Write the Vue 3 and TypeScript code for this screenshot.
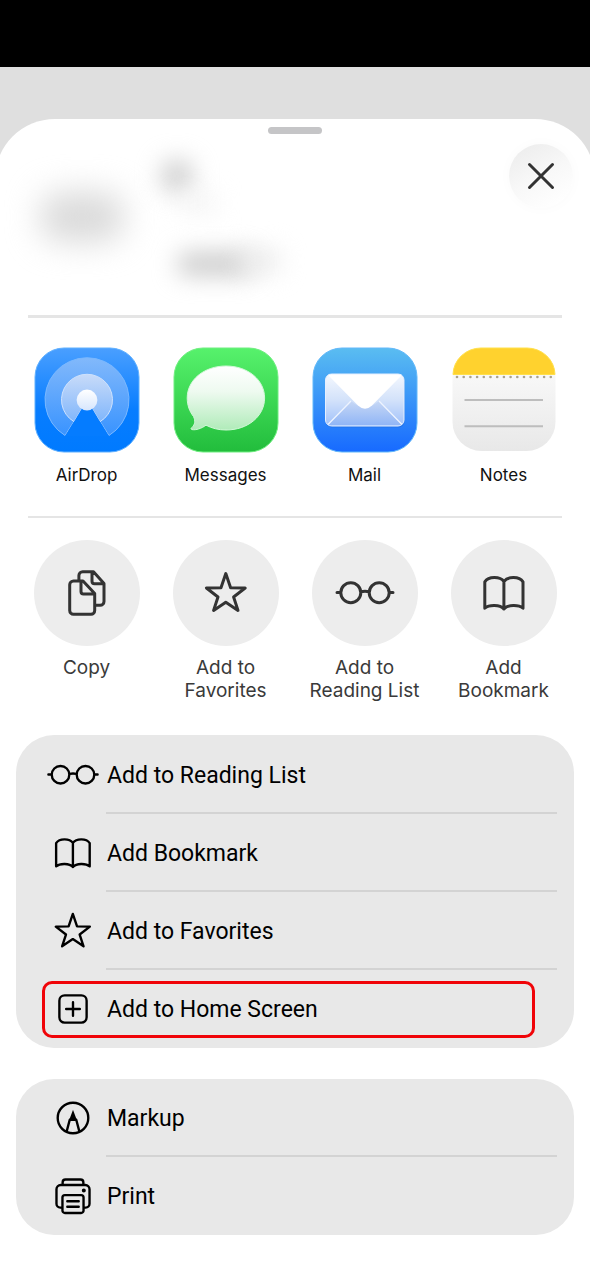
<script setup lang="ts">
type Glyph = 'copy' | 'star' | 'glasses' | 'book' | 'plus' | 'markup' | 'printer'

interface Action {
  label: string
  glyph: Glyph
  highlighted?: boolean
}

const shapes: Record<Glyph, string> = {
  copy:
    'M39.5 41H49L60.7 53.5V70.5A3.8 3.8 0 0 1 57 74.3H39.5A3.8 3.8 0 0 1 35.7 70.5V44.8A3.8 3.8 0 0 1 39.5 41Z' +
    'M47 41V51.5Q47 54 49.5 54H60.7' +
    'M44.9 41V35.6A3.8 3.8 0 0 1 48.7 31.8H59.5L70 43.5V61.5A3.8 3.8 0 0 1 66.2 65.3H61' +
    'M58 32V41.2Q58 43.7 60.5 43.7H70',
  star:
    'M52.8 33.6L57.6 47.8L72.2 48L60.6 57L65 70.4L52.8 62.2L40.6 70.4L45 57L33.4 48L48 47.8Z',
  glasses:
    'M28.8 52.7a10 10 0 1 0 20 0a10 10 0 1 0-20 0' +
    'M57.2 52.7a10 10 0 1 0 20 0a10 10 0 1 0-20 0' +
    'M48.8 51.8Q53 50.8 57.2 51.8M25 52.4H28.6M77.4 52.4H81',
  book:
    'M52.9 41.5C49 36.2 37.5 36.2 33.8 41.8V68.2C38 64.6 49 64.4 52.9 69C56.8 64.4 67.8 64.6 72 68.2V41.8C68.3 36.2 56.8 36.2 52.9 41.5V69',
  plus:
    'M43.5 37.5H62.5A6 6 0 0 1 68.5 43.5V62.5A6 6 0 0 1 62.5 68.5H43.5A6 6 0 0 1 37.5 62.5V43.5A6 6 0 0 1 43.5 37.5Z' +
    'M53 45.2V60.8M45.2 53H60.8',
  markup:
    'M35.6 53a17.4 17.4 0 1 0 34.8 0a17.4 17.4 0 1 0-34.8 0' +
    'M45.8 68.2L49.3 55H56.7L60.2 68.2',
  printer:
    'M41 66.2H38.5A4.3 4.3 0 0 1 34.2 61.9V45.3A4.8 4.8 0 0 1 39 40.5H67A4.8 4.8 0 0 1 71.8 45.3V61.9A4.3 4.3 0 0 1 67.5 66.2H65' +
    'M41.2 40.5V37.5A3.3 3.3 0 0 1 44.5 34.2H61.5A3.3 3.3 0 0 1 64.8 37.5V40.5' +
    'M43.8 52H62.2A2.8 2.8 0 0 1 65 54.8V69.5A2.8 2.8 0 0 1 62.2 72.3H43.8A2.8 2.8 0 0 1 41 69.5V54.8A2.8 2.8 0 0 1 43.8 52Z' +
    'M46.5 59H59.5M46.5 65.2H59.5',
}

const solids: Partial<Record<Glyph, string>> = {
  markup: 'M53 43.5L57.2 55H48.8Z',
  printer: 'M63 46.8a2.3 2.3 0 1 0 4.6 0a2.3 2.3 0 1 0-4.6 0',
}

const quickActions: Action[] = [
  { label: 'Copy', glyph: 'copy' },
  { label: 'Add to Favorites', glyph: 'star' },
  { label: 'Add to Reading List', glyph: 'glasses' },
  { label: 'Add Bookmark', glyph: 'book' },
]

const groups: Action[][] = [
  [
    { label: 'Add to Reading List', glyph: 'glasses' },
    { label: 'Add Bookmark', glyph: 'book' },
    { label: 'Add to Favorites', glyph: 'star' },
    { label: 'Add to Home Screen', glyph: 'plus', highlighted: true },
  ],
  [
    { label: 'Markup', glyph: 'markup' },
    { label: 'Print', glyph: 'printer' },
  ],
]

const noteDots = Array.from({ length: 15 }, (_, i) => 6 + i * 6.7)
</script>

<template>
  <div class="screen">
    <div class="status-bar"></div>
    <main class="sheet">
      <div class="handle"></div>
      <header class="header">
        <svg class="preview" viewBox="0 0 330 180" aria-hidden="true">
          <defs>
            <filter id="soft" x="-100%" y="-150%" width="300%" height="400%" color-interpolation-filters="sRGB">
              <feGaussianBlur stdDeviation="16" />
            </filter>
            <filter id="softer" x="-200%" y="-300%" width="500%" height="700%" color-interpolation-filters="sRGB">
              <feGaussianBlur stdDeviation="12" />
            </filter>
          </defs>
          <rect x="40" y="58" width="84" height="50" rx="22" fill="#dadada" filter="url(#soft)" />
          <circle cx="177" cy="42" r="16" fill="#cbcbcb" filter="url(#softer)" />
          <rect x="180" y="62" width="36" height="14" fill="#f0f0f0" filter="url(#softer)" />
          <rect x="178" y="119" width="74" height="22" rx="8" fill="#c8c8c8" filter="url(#softer)" />
          <rect x="240" y="116" width="40" height="22" rx="8" fill="#eaeaea" filter="url(#softer)" />
        </svg>
        <button class="close" type="button" aria-label="Close">
          <svg viewBox="0 0 64 64" aria-hidden="true">
            <path d="M20.5 20.5L43.5 43.5M43.5 20.5L20.5 43.5" />
          </svg>
        </button>
      </header>

      <section class="apps" aria-label="Apps">
        <button class="tile app" type="button">
          <svg viewBox="0 0 106 106" aria-hidden="true">
            <defs>
              <linearGradient id="air-bg" x2="0" y2="1">
                <stop offset="0" stop-color="#4a9fff" />
                <stop offset=".6" stop-color="#077dff" />
                <stop offset="1" stop-color="#007aff" />
              </linearGradient>
              <linearGradient id="air-outer" x2="0" y2="1">
                <stop offset="0" stop-color="#82b9fb" />
                <stop offset="1" stop-color="#3993ff" />
              </linearGradient>
              <linearGradient id="air-inner" x2="0" y2="1">
                <stop offset="0" stop-color="#c8dbf9" />
                <stop offset="1" stop-color="#80b6fb" />
              </linearGradient>
              <linearGradient id="air-dot" x2="0" y2="1">
                <stop offset="0" stop-color="#ffffff" />
                <stop offset="1" stop-color="#d7e6fd" />
              </linearGradient>
            </defs>
            <rect x="1" y="1" width="104" height="104" rx="29" fill="url(#air-bg)" stroke="#5fb0ff" />
            <path d="M31 88.5A42 42 0 1 1 75 88.5L53 53Z" fill="url(#air-outer)" stroke="#7ab8ff" />
            <path d="M40 74.7A25.5 25.5 0 1 1 66 74.7L53 53Z" fill="url(#air-inner)" stroke="#cfe2fd" />
            <path d="M53 53L74.6 89H31.4Z" fill="#057cff" />
            <circle cx="53" cy="53" r="10.4" fill="url(#air-dot)" />
          </svg>
          <span>AirDrop</span>
        </button>

        <button class="tile app" type="button">
          <svg viewBox="0 0 106 106" aria-hidden="true">
            <defs>
              <linearGradient id="msg-bg" x2="0" y2="1">
                <stop offset="0" stop-color="#57f26c" />
                <stop offset="1" stop-color="#22bd3c" />
              </linearGradient>
              <linearGradient id="msg-bubble" x2="0" y2="1">
                <stop offset="0" stop-color="#ffffff" />
                <stop offset=".4" stop-color="#eefaf0" />
                <stop offset="1" stop-color="#b0ebb9" />
              </linearGradient>
            </defs>
            <rect x="1" y="1" width="104" height="104" rx="29" fill="url(#msg-bg)" stroke="#6fee80" />
            <path
              d="M53 19C75 19 91.6 33 91.6 51S75 83 53 83C45.500 83 39 81.300 33 78.200C28.500 81.500 23 83.300 19 82.600C17.500 82 18 81.200 19 80.400C22 77.500 22.600 74 20.500 69.500C16.500 64.500 14.200 58 14.200 51C14.200 33 31 19 53 19Z"
              fill="url(#msg-bubble)"
              stroke="#d3f8d9"
            />
          </svg>
          <span>Messages</span>
        </button>

        <button class="tile app" type="button">
          <svg viewBox="0 0 106 106" aria-hidden="true">
            <defs>
              <linearGradient id="mail-bg" x2="0" y2="1">
                <stop offset="0" stop-color="#5abdf1" />
                <stop offset="1" stop-color="#176aff" />
              </linearGradient>
              <linearGradient id="mail-paper" x2="0" y2="1">
                <stop offset="0" stop-color="#f4f8fe" />
                <stop offset=".5" stop-color="#d3e2fa" />
                <stop offset="1" stop-color="#9fc0fa" />
              </linearGradient>
              <linearGradient id="mail-front" x2="0" y2="1">
                <stop offset="0" stop-color="#c6d7f5" />
                <stop offset="1" stop-color="#91b6f6" />
              </linearGradient>
            </defs>
            <rect x="1" y="1" width="104" height="104" rx="29" fill="url(#mail-bg)" stroke="#62b8fa" />
            <rect x="14" y="28" width="78.500" height="52.500" rx="6" fill="#1550b8" opacity=".25" />
            <rect x="13.500" y="27" width="78.500" height="52" rx="6" fill="url(#mail-paper)" />
            <path d="M16 78L39 54Q53 66 67 54L90 78Z" fill="url(#mail-front)" />
            <path d="M16 77.500L39 54M90 77.500L67 54" stroke="#eef4ff" stroke-width="1.300" fill="none" />
            <path d="M16 28Q17 27 20 27H86Q89 27 90 28L60 58.500Q53 65 46 58.500Z" fill="#ffffff" />
            <rect x="13.500" y="27" width="78.500" height="52" rx="6" fill="none" stroke="#e5efff" />
          </svg>
          <span>Mail</span>
        </button>

        <button class="tile app" type="button">
          <svg viewBox="0 0 106 106" aria-hidden="true">
            <defs>
              <linearGradient id="note-bg" x2="0" y2="1">
                <stop offset="0" stop-color="#ffffff" />
                <stop offset=".3" stop-color="#f7f7f7" />
                <stop offset="1" stop-color="#e8e8e8" />
              </linearGradient>
            </defs>
            <rect x="1.500" y="1" width="103" height="103" rx="29" fill="url(#note-bg)" />
            <path d="M2 27.500A28 27 0 0 1 30 1H76A28 27 0 0 1 104 27.500Z" fill="#ffd22e" stroke="#ffe04a" />
            <circle v-for="x in noteDots" :key="x" :cx="x" cy="30" r="1.300" fill="#aaa28c" />
            <path d="M13.500 53H92M13.500 79.300H92" stroke="#bdbdbd" stroke-width="2" />
          </svg>
          <span>Notes</span>
        </button>
      </section>

      <section class="quick" aria-label="Quick actions">
        <button v-for="a in quickActions" :key="a.label" class="tile action" type="button">
          <svg class="disc glyph" viewBox="0 0 106 106" aria-hidden="true">
            <path :d="shapes[a.glyph]" />
          </svg>
          <span>{{ a.label }}</span>
        </button>
      </section>

      <ul v-for="(group, g) in groups" :key="g" class="group">
        <li v-for="a in group" :key="a.label">
          <button class="row" :class="{ highlighted: a.highlighted }" type="button">
            <svg class="glyph" viewBox="20 20 66 66" aria-hidden="true">
              <path :d="shapes[a.glyph]" />
              <path v-if="solids[a.glyph]" class="solid" :d="solids[a.glyph]" />
            </svg>
            <span class="row-label">{{ a.label }}</span>
          </button>
        </li>
      </ul>
    </main>
  </div>
</template>

<style>
body {
  margin: 0;
  background: #fff;
}
</style>

<style scoped>
.screen {
  min-height: 100vh;
  overflow: hidden;
  background: #dfdfdf;
  font-family: Inter, "Liberation Sans", sans-serif;
}

.status-bar {
  height: 67px;
  margin-bottom: 52px;
  background: #000;
}

.sheet {
  display: flex;
  flex-direction: column;
  margin: 0 -5px;
  padding: 8px 21px 45px;
  border-radius: 60px 60px 0 0;
  background: #fff;
}

button {
  margin: 0;
  padding: 0;
  border: 0;
  background: none;
  color: inherit;
  font: inherit;
  cursor: pointer;
}

svg {
  display: block;
}

.handle {
  align-self: center;
  width: 54px;
  height: 7px;
  border-radius: 4px;
  background: #c5c5c7;
}

.header {
  display: flex;
  justify-content: space-between;
  align-items: flex-start;
  height: 181px;
  margin: 0 12px;
  border-bottom: 3px solid #e5e5e5;
}

.preview {
  width: 330px;
  height: 180px;
  margin-left: -28px;
  overflow: visible;
}

.close {
  width: 64px;
  height: 64px;
  margin: 10px -11px 0 0;
  border-radius: 50%;
  background: linear-gradient(150deg, #ececec 5%, #f8f8f8 50%, #fff 90%);
  box-shadow: 0 0 14px #00000006;
}

.close path {
  fill: none;
  stroke: #333;
  stroke-width: 3;
  stroke-linecap: round;
}

.apps,
.quick {
  display: grid;
  grid-template-columns: repeat(4, 1fr);
  margin: 0 1px;
}

.apps {
  padding: 29px 0 31px;
}

.quick {
  position: relative;
  padding: 24px 0 33px;
}

.quick::before {
  content: "";
  position: absolute;
  inset: 0 11px auto;
  height: 2px;
  background: #e5e5e5;
}

.tile {
  display: flex;
  flex-direction: column;
  align-items: center;
}

.tile svg {
  width: 106px;
  height: 106px;
}

.app span {
  margin-top: 12px;
  color: #111;
  font-size: 17px;
  line-height: 20px;
}

.action span {
  width: 112px;
  margin-top: 10px;
  color: #3a3a3a;
  font-size: 19px;
  line-height: 23px;
}

.glyph {
  fill: none;
  stroke: currentColor;
  stroke-width: 2.7;
  stroke-linecap: round;
  stroke-linejoin: round;
}

.disc {
  border-radius: 50%;
  background: #ededed;
  color: #333;
  stroke-width: 3;
}

.solid {
  fill: currentColor;
  stroke: none;
}

.group {
  margin: 0 0 31px;
  padding: 1px 0 0;
  border-radius: 38px;
  background: #e8e8e8;
  list-style: none;
}

.group:last-child {
  margin-bottom: 0;
  padding-top: 0;
}

.row {
  position: relative;
  display: flex;
  align-items: center;
  gap: 5px;
  width: 100%;
  height: 78px;
  padding: 0 17px 0 28px;
  color: #000;
  font-family: Roboto, Inter, sans-serif;
  font-size: 23px;
  text-align: left;
}

.row .glyph {
  flex: none;
  width: 58px;
  height: 58px;
}

li:not(:last-child) .row::after {
  content: "";
  position: absolute;
  inset: auto 17px 0 90px;
  height: 2px;
  background: #d3d3d3;
}

.highlighted::before {
  content: "";
  position: absolute;
  inset: 11px 39px 10px 26px;
  border: 3px solid #f00408;
  border-radius: 10px;
}
</style>
